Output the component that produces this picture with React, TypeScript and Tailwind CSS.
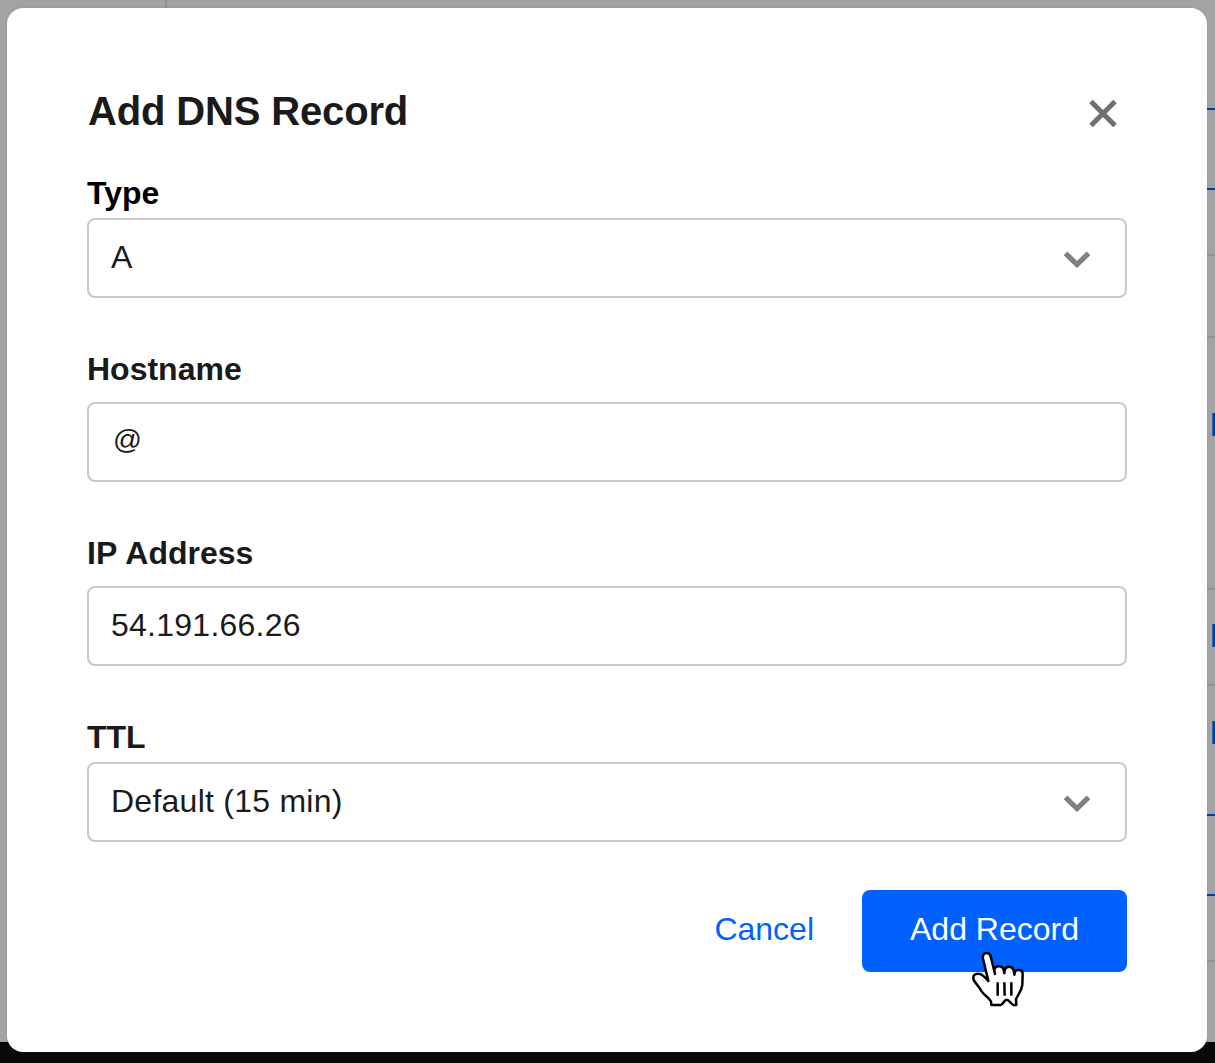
import clsx from 'clsx'

const rows = [
  { height: 'h-[110px]', line: 'border-[#003fa3]' },
  { height: 'h-20', line: 'border-[#003fa3]' },
  { height: 'h-[66px]', line: 'border-[#929292]' },
  { height: 'h-[82px]', line: 'border-[#929292]' },
  { height: 'h-[252px]', line: 'border-[#929292]', action: 'pt-[75px]' },
  { height: 'h-24', line: 'border-[#929292]', action: 'pt-[34px]' },
  { height: 'h-[130px]', line: 'border-[#003fa3]', action: 'pt-[35px]' },
  { height: 'h-20', line: 'border-[#003fa3]' },
  { height: 'h-[66px]', line: 'border-[#929292]' },
]

const fields = [
  { label: 'Type', value: 'A', select: true, className: 'text-black' },
  { label: 'Hostname', value: '@', small: true, className: 'mt-[51px]' },
  { label: 'IP Address', value: '54.191.66.26', className: 'mt-[51px]' },
  { label: 'TTL', value: 'Default (15 min)', select: true, className: 'mt-[51px]' },
]

function Chevron() {
  return (
    <svg className="h-[18px] w-7" viewBox="0 0 28 18" fill="none">
      <path d="M2.5 3.3l11.5 11.2L25.5 3.3" stroke="#808080" strokeWidth="5.2" />
    </svg>
  )
}

function HandCursor() {
  return (
    <svg
      className="absolute top-[60px] left-[108px] h-[58px] w-[57px]"
      viewBox="90 210 171 174"
      fill="none"
      stroke="#000"
      strokeWidth="7.5"
      strokeLinejoin="round"
    >
      <path
        fill="#fff"
        d="M145 303L129 236C127 226 132 219 140 219C148 219 151 224 153 232L165 282L163 269C165 256 188 254 191 269L193 280L194 271C197 257 217 257 221 271L223 284L225 276C229 267 248 268 248 281L247 315C244 337 231 347 228 358L229 375H221C213 374 208 359 200 359C192 359 190 374 182 375H154L153 364C143 349 133 346 125 334C116 318 108 312 101 300C97 287 105 280 115 281C128 281 134 292 145 303Z"
      />
      <path d="M173 307v40M193 307l1 40M214 307v40" />
    </svg>
  )
}

export default function App() {
  return (
    <div className="relative h-[1063px] w-[1215px] overflow-hidden bg-[#0a0a0a] font-['Liberation_Sans',Arial,sans-serif]">
      <div className="flex h-[1042px] bg-[#a3a3a3]">
        <div className="w-[167px] border-r-2 border-[#929292]" />
        <div className="flex-1">
          {rows.map((row, idx) => (
            <div key={idx} className={clsx('flex justify-end border-b-2', row.height, row.line, row.action)}>
              {row.action && <div className="h-[23px] w-[3px] border-l border-[#3b62a3] bg-[#003fa3]" />}
            </div>
          ))}
        </div>
      </div>

      <div
        role="dialog"
        className="absolute top-2 left-[7px] flex h-[1044px] w-[1200px] flex-col rounded-2xl bg-white px-20 pt-[79px] text-[32px] leading-10 text-[#1a1a1a] shadow-[0_0_3px_rgba(0,0,0,0.1)]"
      >
        <div className="flex items-start justify-between">
          <h1 className="pl-px text-[40px] leading-[48px] font-bold tracking-[-0.15px]">Add DNS Record</h1>
          <button aria-label="Close" className="mt-3 mr-[10px]">
            <svg className="size-7" viewBox="0 0 28 28" fill="none">
              <path d="M2 2.5l24 24M26 2.5L2 26.5" stroke="#707070" strokeWidth="5" />
            </svg>
          </button>
        </div>

        <div className="mt-[38px]">
          {fields.map((f) => (
            <div key={f.label} className={f.className}>
              <div className="font-bold [word-spacing:1px]">{f.label}</div>
              <div
                className={clsx(
                  'flex h-20 items-center justify-between rounded-lg border-2 border-[#c8c8c8] px-[22px] tracking-[0.25px] text-[#1a1a1a]',
                  f.select ? 'mt-[5px]' : 'mt-[13px]',
                )}
              >
                <span className={f.small ? 'mb-[7px] pl-[2px] text-[28.5px]' : 'mb-[3px]'}>{f.value}</span>
                {f.select && (
                  <span className="mt-0.5 mr-3">
                    <Chevron />
                  </span>
                )}
              </div>
            </div>
          ))}
        </div>

        <div className="mt-12 flex justify-end">
          <button className="mr-12 pb-[5px] text-[#0061fe]">Cancel</button>
          <button className="relative h-[82px] w-[265px] rounded-lg bg-[#0061fe] pb-[5px] text-white">
            Add Record
            <HandCursor />
          </button>
        </div>
      </div>
    </div>
  )
}
